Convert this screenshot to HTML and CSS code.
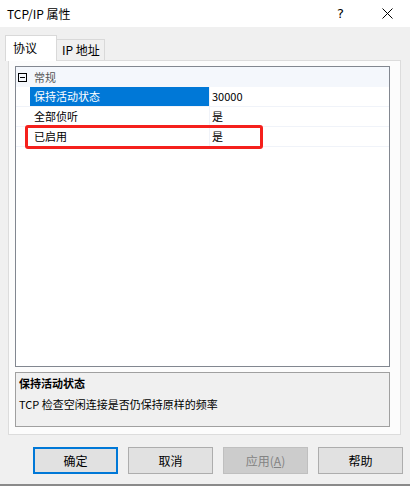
FILE: index.html
```html
<!DOCTYPE html>
<html lang="zh-CN">
  <head>
    <meta charset="utf-8" />
    <title>TCP/IP 属性</title>
    <link rel="stylesheet" href="styles.css">
  </head>
  <body>
    <div class="window">
      <div class="titlebar">
        <span class="title">TCP/IP 属性</span>
        <span class="help">?</span>
        <span class="close">
          <svg width="11" height="11" viewBox="0 0 11 11"><path d="M0.5 0.5 L10.5 10.5 M10.5 0.5 L0.5 10.5" stroke="#000" stroke-width="1" fill="none"/></svg>
        </span>
      </div>

      <div class="tabs">
        <div class="tab active">协议</div>
        <div class="tab">IP 地址</div>
      </div>

      <div class="panel">
        <div class="grid">
          <div class="category">
            <span class="toggle"></span>
            <span class="cat-name">常规</span>
          </div>
          <div class="row">
            <div class="margin"></div>
            <div class="name selected">保持活动状态</div>
            <div class="value">30000</div>
          </div>
          <div class="row">
            <div class="margin"></div>
            <div class="name">全部侦听</div>
            <div class="value">是</div>
          </div>
          <div class="row">
            <div class="margin"></div>
            <div class="name">已启用</div>
            <div class="value">是</div>
          </div>
          <!-- highlight drawn over the grid -->
          <div class="mark"></div>
        </div>

        <div class="desc">
          <div class="desc-title">保持活动状态</div>
          <div class="desc-text">TCP 检查空闲连接是否仍保持原样的频率</div>
        </div>
      </div>

      <div class="buttons">
        <button class="btn default">确定</button>
        <button class="btn">取消</button>
        <button class="btn disabled">应用(<u>A</u>)</button>
        <button class="btn">帮助</button>
      </div>
      <div class="edge"></div>
    </div>
  </body>
</html>
```

FILE: styles.css
```css
body {
  margin: 0;
  background-color: #f0f0f0;
  font-family: "Noto Sans CJK SC", "Noto Sans", sans-serif;
  font-size: 12px;
  color: #000;
}

.window {
  width: 410px;
  height: 486px;
  display: flex;
  flex-direction: column;
  overflow: hidden;
}

.titlebar {
  height: 27px;
  background: #fff;
  display: flex;
  align-items: center;
  flex-shrink: 0;
}

.title {
  padding-left: 7px;
  font-size: 12px;
  line-height: 14px;
  flex: 1;
}

.help {
  width: 14px;
  font-family: "DejaVu Sans", sans-serif;
  font-size: 13px;
  margin-right: 31px;
}

.close {
  width: 11px;
  height: 11px;
  margin-right: 17px;
  display: flex;
}

.tabs {
  display: flex;
  align-items: flex-end;
  padding-left: 5px;
  margin-top: 9px;
  height: 24px;
  flex-shrink: 0;
}

.tab {
  height: 20px;
  line-height: 20px;
  padding: 0 5px 0 5px;
  width: 37px;
  white-space: nowrap;
  border: 1px solid #d9d9d9;
  border-bottom: none;
  border-left: none;
  background: #f0f0f0;
  font-size: 12px;
}

.tab.active {
  line-height: 24px;
  width: 37px;
  padding: 0 6px 0 7px;
  background: #fff;
  border-left: 1px solid #d9d9d9;
  position: relative;
  z-index: 1;
  margin-bottom: -1px;
  height: 25px;
}

.panel {
  margin: 0 9px 0 8px;
  height: 375px;
  box-sizing: border-box;
  background: #fcfcfc;
  border: 1px solid #dcdcdc;
  padding: 5px 10px 0 6px;
  flex-shrink: 0;
  font-size: 11px;
}

.grid {
  position: relative;
  height: 301px;
  box-sizing: border-box;
  border: 1px solid #828790;
  background: #fff;
}

.category {
  height: 20px;
  background: #f4f7fc;
  display: flex;
  align-items: center;
}

.toggle {
  width: 7px;
  height: 7px;
  border: 1px solid #000;
  margin-left: 2px;
  position: relative;
}

.toggle::after {
  content: "";
  position: absolute;
  left: 1px;
  top: 3px;
  width: 5px;
  height: 1px;
  background: #000;
}

.cat-name {
  margin-left: 7px;
  color: #555;
  line-height: 20px;
}

.row {
  display: flex;
  height: 20px;
  border-bottom: 1px solid #f0f3f9;
  box-sizing: border-box;
}

.row .margin {
  width: 14px;
  background: #fff;
}

.name {
  width: 175px;
  padding-left: 4px;
  line-height: 19px;
  border-right: 1px solid #f0f3f9;
}

.name.selected {
  background: #0078d7;
  color: #fff;
}

.value {
  flex: 1;
  padding-left: 2px;
  line-height: 19px;
}

.mark {
  position: absolute;
  left: 9px;
  top: 58px;
  width: 232px;
  height: 18px;
  border: 3px solid #f5201c;
  border-radius: 3px;
}

.desc {
  margin-top: 5px;
  height: 55px;
  box-sizing: border-box;
  border: 1px solid #a0a0a0;
  background: #f0f0f0;
  padding: 2px 3px;
}

.desc-title {
  font-weight: bold;
  line-height: 17px;
}

.desc-text {
  margin-top: 4px;
  line-height: 17px;
}

.buttons {
  display: flex;
  gap: 10px;
  padding-left: 33px;
  margin-top: 12px;
  flex-shrink: 0;
}

.btn {
  width: 85px;
  height: 27px;
  box-sizing: border-box;
  border: 1px solid #adadad;
  background: #e1e1e1;
  font-family: "Noto Sans CJK SC", "Noto Sans", sans-serif;
  font-size: 12px;
  color: #000;
  padding: 0;
}

.btn.default {
  border: 2px solid #0078d7;
}

.btn.disabled {
  background: #cccccc;
  border-color: #bfbfbf;
  color: #838383;
}

.edge {
  margin-top: 10px;
  height: 2px;
  background: #8a8a8a;
}
```
